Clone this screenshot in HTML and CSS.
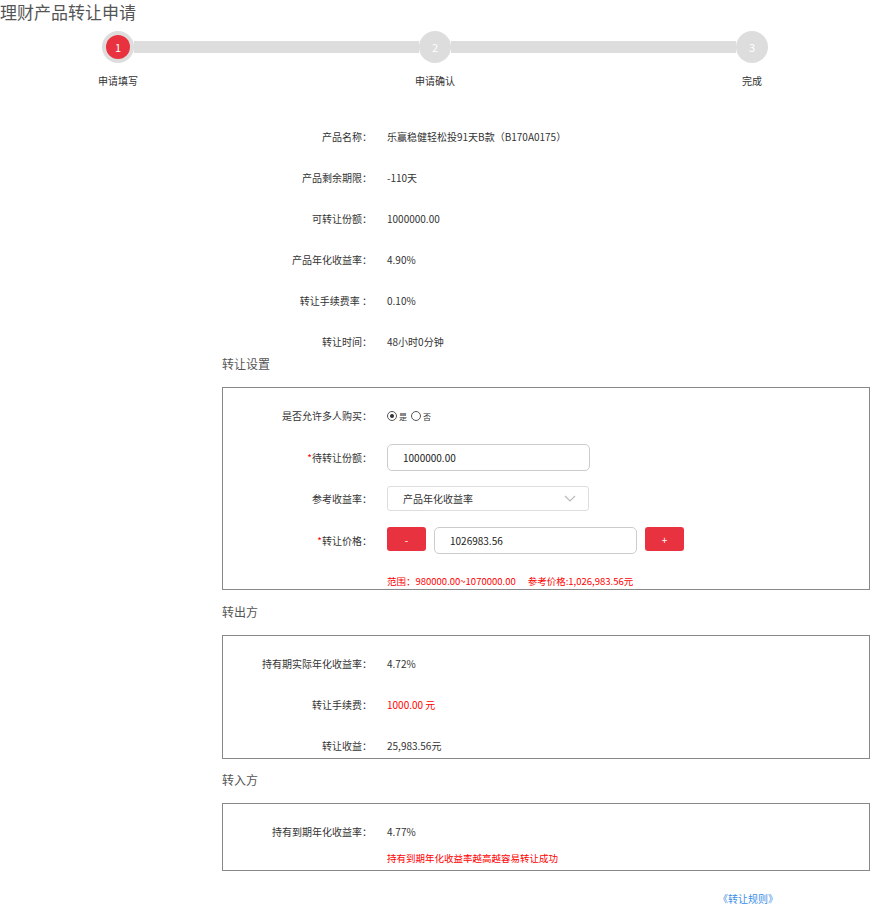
FILE: index.html
```html
<!DOCTYPE html>
<html lang="zh-CN">
  <head>
    <meta charset="UTF-8" />
    <meta name="viewport" content="width=device-width, initial-scale=1.0" />
    <title>理财产品转让申请</title>
    <link rel="stylesheet" href="styles.css">
  </head>

  <body>
    <h1 class="titulo">理财产品转让申请</h1>

    <div class="passos">
      <div class="circulo ativo"><span>1</span></div>
      <div class="linha"></div>
      <div class="circulo"><span>2</span></div>
      <div class="linha"></div>
      <div class="circulo"><span>3</span></div>
    </div>
    <div class="passos-texto">
      <span>申请填写</span>
      <span>申请确认</span>
      <span>完成</span>
    </div>

    <div class="conteudo">

      <div class="info">
        <div class="linha-info"><label>产品名称：</label><span>乐赢稳健轻松投91天B款（B170A0175）</span></div>
        <div class="linha-info"><label>产品剩余期限：</label><span>-110天</span></div>
        <div class="linha-info"><label>可转让份额：</label><span>1000000.00</span></div>
        <div class="linha-info"><label>产品年化收益率：</label><span>4.90%</span></div>
        <div class="linha-info"><label>转让手续费率 ：</label><span>0.10%</span></div>
        <div class="linha-info"><label>转让时间：</label><span>48小时0分钟</span></div>
      </div>

      <h3 class="secao primeira">转让设置</h3>
      <div class="caixa caixa-config">
        <div class="linha-info r-radio">
          <label>是否允许多人购买：</label>
          <div class="radios">
            <span class="radio marcado"></span><span class="radio-txt">是</span>
            <span class="radio"></span><span class="radio-txt">否</span>
          </div>
        </div>
        <div class="linha-info r-input">
          <label><i class="obrig">*</i>待转让份额：</label>
          <div class="campo">1000000.00</div>
        </div>
        <div class="linha-info r-select">
          <label>参考收益率：</label>
          <div class="seletor">
            <span>产品年化收益率</span>
            <svg width="12" height="7" viewBox="0 0 12 7"><path d="M1 1 L6 6 L11 1" fill="none" stroke="#bbb" stroke-width="1.2"/></svg>
          </div>
        </div>
        <div class="linha-info r-preco">
          <label><i class="obrig">*</i>转让价格：</label>
          <div class="preco">
            <button class="btn-vermelho">-</button>
            <div class="campo">1026983.56</div>
            <button class="btn-vermelho">+</button>
          </div>
        </div>
        <div class="linha-info r-faixa">
          <label></label>
          <div class="aviso">范围：980000.00~1070000.00<span class="ref">参考价格:1,026,983.56元</span></div>
        </div>
      </div>

      <h3 class="secao">转出方</h3>
      <div class="caixa caixa-saida">
        <div class="linha-info"><label>持有期实际年化收益率：</label><span>4.72%</span></div>
        <div class="linha-info"><label>转让手续费：</label><span class="vermelho">1000.00 元</span></div>
        <div class="linha-info"><label>转让收益：</label><span>25,983.56元</span></div>
      </div>

      <h3 class="secao">转入方</h3>
      <div class="caixa caixa-entrada">
        <div class="linha-info"><label>持有到期年化收益率：</label><span>4.77%</span></div>
        <div class="linha-info r-nota"><label></label><span class="aviso">持有到期年化收益率越高越容易转让成功</span></div>
      </div>

      <div class="regras"><a href="#">《转让规则》</a></div>
    </div>
  </body>
</html>
```

FILE: styles.css
```css
body {
  margin: 0;
  font-family: "Noto Sans CJK SC", "Liberation Sans", sans-serif;
  font-size: 10px;
  color: #333;
}

.titulo {
  margin: 0;
  font-size: 17px;
  font-weight: normal;
  line-height: 24px;
  color: #555;
}

/* passos */
.passos {
  display: flex;
  align-items: center;
  width: 666px;
  margin: 7px 0 0 102px;
}
.circulo {
  width: 32px;
  height: 32px;
  border-radius: 50%;
  background: #ddd;
  display: flex;
  align-items: center;
  justify-content: center;
  flex-shrink: 0;
}
.circulo span {
  width: 24px;
  height: 24px;
  border-radius: 50%;
  color: #fff;
  font-size: 11px;
  line-height: 24px;
  text-align: center;
}
.circulo.ativo span {
  background: #e8323f;
}
.linha {
  flex: 1;
  height: 12px;
  background: #ddd;
}
.passos-texto {
  display: flex;
  justify-content: space-between;
  width: 714px;
  margin: 11px 0 0 78px;
  line-height: 14px;
}
.passos-texto span {
  width: 80px;
  text-align: center;
}

/* conteudo */
.conteudo {
  margin-left: 222px;
  width: 648px;
}
.info {
  margin-top: 39px;
}
.linha-info {
  display: grid;
  grid-template-columns: 150px 1fr;
  column-gap: 15px;
  align-items: center;
  height: 20px;
  line-height: 20px;
}
.info .linha-info + .linha-info {
  margin-top: 21px;
}
.linha-info label {
  text-align: right;
}
.obrig {
  font-style: normal;
  color: #f00;
}
.vermelho {
  color: #f00;
}

.secao {
  margin: 0;
  font-size: 12px;
  font-weight: normal;
  line-height: 20px;
  color: #555;
}
.secao.primeira {
  margin-top: 2px;
}
.caixa {
  margin-top: 13px;
  border: 1px solid #888;
  box-sizing: border-box;
  width: 648px;
}
.caixa .linha-info {
  grid-template-columns: 149px 1fr;
}
.caixa-config {
  padding: 17px 0 1px;
  margin-bottom: 12px;
}
.r-input { height: 27px; margin-top: 19px; }
.r-select { height: 25px; margin-top: 15px; }
.r-preco { height: 27px; margin-top: 16px; }
.r-faixa { height: 14px; margin-top: 20px; line-height: 14px; }

.radios {
  display: flex;
  align-items: center;
}
.radio {
  width: 8px;
  height: 8px;
  border: 1px solid #555;
  border-radius: 50%;
  display: flex;
  align-items: center;
  justify-content: center;
}
.radio.marcado::after {
  content: "";
  width: 4px;
  height: 4px;
  border-radius: 50%;
  background: #333;
}
.radio-txt {
  font-size: 8px;
  margin: 2px 4px 0 2px;
}

.campo {
  width: 203px;
  height: 27px;
  box-sizing: border-box;
  border: 1px solid #ccc;
  border-radius: 5px;
  padding-left: 15px;
  line-height: 25px;
  color: #222;
}
.seletor {
  width: 202px;
  height: 25px;
  box-sizing: border-box;
  border: 1px solid #ddd;
  border-radius: 3px;
  padding: 0 12px 0 15px;
  display: flex;
  align-items: center;
  justify-content: space-between;
}
.preco {
  display: flex;
  align-items: flex-start;
  gap: 8px;
  height: 27px;
}
.btn-vermelho {
  width: 39px;
  height: 24px;
  border: none;
  border-radius: 3px;
  background: #e8323f;
  color: #fff;
  font-family: inherit;
  font-size: 10px;
  padding: 0;
}
.aviso {
  color: #f00;
  font-size: 9.5px;
}
.aviso .ref {
  margin-left: 12px;
}

.caixa-saida {
  padding: 18px 0 2px;
  margin-bottom: 11px;
}
.caixa-saida .linha-info + .linha-info {
  margin-top: 21px;
}
.caixa-entrada {
  padding: 18px 0 5px;
}
.r-nota {
  height: 14px;
  line-height: 14px;
  margin-top: 9px;
}

.regras {
  margin: 21px 0 0 496px;
  line-height: 14px;
}
.regras a {
  color: #3a8ee6;
  text-decoration: none;
  font-size: 10px;
}
```
